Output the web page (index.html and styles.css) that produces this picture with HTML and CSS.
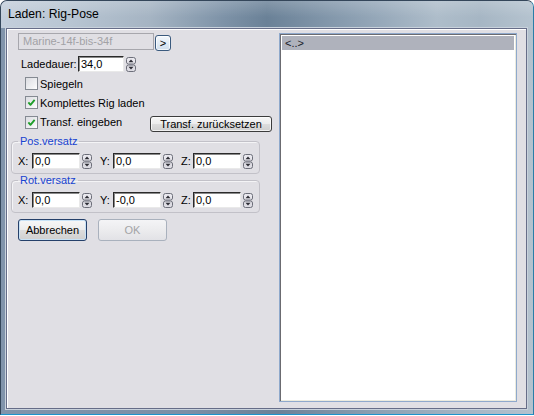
FILE: index.html
```html
<!DOCTYPE html>
<html>
<head>
<meta charset="utf-8">
<link rel="stylesheet" href="styles.css">
</head>
<body>
<svg class="defs" width="0" height="0" aria-hidden="true">
  <symbol id="spin" viewBox="0 0 10 15">
    <rect x="0.5" y="0.5" width="9" height="6.5" rx="2" fill="#e9e8ee" stroke="#6d6f7a"/>
    <rect x="0.5" y="8" width="9" height="6.5" rx="2" fill="#dddce3" stroke="#6d6f7a"/>
    <path d="M2.5 5.2 L5 2.4 L7.5 5.2 Z" fill="#2c2c34"/>
    <path d="M2.5 9.8 L5 12.6 L7.5 9.8 Z" fill="#2c2c34"/>
  </symbol>
  <symbol id="tick" viewBox="0 0 13 13">
    <path d="M2.8 6.4 L5.3 9.2 L10.2 3.4" fill="none" stroke="#1f9e2a" stroke-width="2.2" stroke-linejoin="round"/>
  </symbol>
</svg>
<div class="window">
  <div class="titlebar">Laden: Rig-Pose</div>
  <div class="client">
    <div class="left">
      <div class="row row-file">
        <div class="combo">Marine-14f-bis-34f</div>
        <button class="btn btn-go">&gt;</button>
      </div>
      <div class="row row-dur">
        <span class="lbl">Ladedauer:</span>
        <div class="input w46">34,0</div>
        <svg class="spin"><use href="#spin"/></svg>
      </div>
      <div class="check c1"><span class="box"></span>Spiegeln</div>
      <div class="check c2"><span class="box"><svg class="tick"><use href="#tick"/></svg></span>Komplettes Rig laden</div>
      <div class="check c3">
        <span class="box"><svg class="tick"><use href="#tick"/></svg></span>Transf. eingeben
        <button class="btn btn-reset">Transf. zurücksetzen</button>
      </div>
      <fieldset class="group g1">
        <legend>Pos.versatz</legend>
        <div class="xyz">
          <div class="f fx"><span class="l">X:</span><div class="input">0,0</div><svg class="spin"><use href="#spin"/></svg></div>
          <div class="f fy"><span class="l">Y:</span><div class="input">0,0</div><svg class="spin"><use href="#spin"/></svg></div>
          <div class="f fz"><span class="l">Z:</span><div class="input">0,0</div><svg class="spin"><use href="#spin"/></svg></div>
        </div>
      </fieldset>
      <fieldset class="group g2">
        <legend>Rot.versatz</legend>
        <div class="xyz">
          <div class="f fx"><span class="l">X:</span><div class="input">0,0</div><svg class="spin"><use href="#spin"/></svg></div>
          <div class="f fy"><span class="l">Y:</span><div class="input">-0,0</div><svg class="spin"><use href="#spin"/></svg></div>
          <div class="f fz"><span class="l">Z:</span><div class="input">0,0</div><svg class="spin"><use href="#spin"/></svg></div>
        </div>
      </fieldset>
      <div class="actions">
        <button class="btn btn-main btn-default">Abbrechen</button>
        <button class="btn btn-main btn-disabled">OK</button>
      </div>
    </div>
    <div class="listbox">
      <div class="item sel">&lt;..&gt;</div>
    </div>
  </div>
</div>
</body>
</html>
```

FILE: styles.css
```css
html, body {
  margin: 0;
  padding: 0;
  background: #ffffff;
}
body {
  width: 534px;
  height: 416px;
  overflow: hidden;
  font-family: "Liberation Sans", Arial, sans-serif;
  font-size: 11px;
  color: #000;
}
.defs {
  position: absolute;
  width: 0;
  height: 0;
}
.window {
  width: 534px;
  height: 415px;
  box-sizing: border-box;
  display: flex;
  flex-direction: column;
  border: 1px solid #34465a;
  border-bottom-color: #1d93cc;
  border-right-color: #2a7ea8;
  border-radius: 7px 7px 0 0;
  background: linear-gradient(90deg, #8194ab 0%, #7b8fa6 35%, #6c8197 52%, #8ea2b4 72%, #a9b8c6 90%, #b4c2ce 100%);
}
.titlebar {
  height: 27px;
  box-sizing: border-box;
  padding: 0 0 0 7px;
  line-height: 27px;
  font-size: 12.2px;
  color: #000;
  border-radius: 6px 6px 0 0;
  background:
    linear-gradient(180deg, rgba(255,255,255,0.18) 0%, rgba(255,255,255,0) 60%),
    linear-gradient(90deg, #c3cedb 0%, #b9c6d3 12%, #a5b4c3 28%, #7d92a7 42%, #6a8197 50%, #7f94a8 60%, #98aabb 72%, #aebdca 82%, #a6b6c4 90%, #b5c3cf 100%);
}
.client {
  flex: 1;
  margin: 0 6px 5px 5px;
  border: 1px solid #666d88;
  box-shadow: 0 0 0 1px #c9d2dc, inset 1px 1px 0 #ffffff;
  background: #e0dfe4;
  display: flex;
  padding: 4px 9px 6px 4px;
}
.left {
  width: 268px;
  display: flex;
  flex-direction: column;
  flex: none;
}
.row {
  display: flex;
  align-items: flex-start;
}
.row-file {
  margin-left: 7px;
}
.combo {
  width: 136px;
  height: 17px;
  box-sizing: border-box;
  border: 1px solid #a7a7ad;
  color: #a2a2a6;
  padding-left: 4px;
  line-height: 15px;
  background: #e0dfe4;
}
.btn {
  font-family: "Liberation Sans", Arial, sans-serif;
  font-size: 11px;
  color: #000;
  padding: 0;
  margin: 0;
  box-sizing: border-box;
  border: 1px solid #3c3c3c;
  border-radius: 3px;
  background: linear-gradient(180deg, #f7f7f7 0%, #ededed 48%, #dddddd 52%, #cfcfcf 100%);
  box-shadow: inset 0 0 0 1px rgba(255,255,255,0.7);
}
.btn-go {
  width: 16px;
  height: 16px;
  margin: 2px 0 0 1px;
  line-height: 12px;
  border-color: #3a5a7e;
  background: linear-gradient(180deg, #f4f8fc 0%, #e2ecf6 50%, #cfdeee 100%);
}
.row-dur {
  margin-top: 5px;
  align-items: center;
}
.lbl {
  margin-left: 10px;
  width: 57px;
}
.input {
  width: 48px;
  height: 16px;
  box-sizing: border-box;
  background: #fff;
  border-top: 1px solid #2a2a2a;
  border-left: 1px solid #2a2a2a;
  border-right: 1px solid #e9e9e9;
  border-bottom: 1px solid #e9e9e9;
  box-shadow: inset 1px 1px 0 #8a8a8a;
  padding-left: 2px;
  line-height: 14px;
  color: #000;
}
.w46 {
  width: 46px;
}
.spin {
  width: 10px;
  height: 15px;
  margin-left: 2px;
  flex: none;
}
.check {
  display: flex;
  align-items: center;
  margin-left: 14px;
  height: 13px;
}
.check .box {
  width: 13px;
  height: 13px;
  box-sizing: border-box;
  border: 1px solid #858a92;
  background: linear-gradient(135deg, #dcdde2 0%, #f2f2f4 70%, #ffffff 100%);
  margin-right: 2px;
  flex: none;
  display: flex;
}
.tick {
  width: 11px;
  height: 11px;
}
.c1 {
  margin-top: 5px;
}
.c2 {
  margin-top: 6px;
}
.c3 {
  margin-top: 7px;
  height: 16px;
  align-items: flex-start;
}
.btn-reset {
  margin-left: auto;
  margin-right: 7px;
  width: 122px;
  height: 16px;
  line-height: 13px;
}
.group {
  margin: 0;
  min-width: 0;
  width: 249px;
  box-sizing: border-box;
  border: 1px solid #c2c1c8;
  border-radius: 4px;
  padding: 6px 4px 4px 6px;
  box-shadow: inset 1px 1px 0 #f4f4f6;
}
.group legend {
  padding: 0 2px;
  margin-left: 0;
  color: #1743d0;
  line-height: 12px;
  font-size: 11px;
}
.g1 {
  margin-top: 3px;
}
.g2 {
  margin-top: 0;
}
.xyz {
  display: flex;
  gap: 8px;
}
.f {
  display: flex;
  align-items: center;
}
.fx .l {
  width: 14px;
}
.fy .l {
  width: 13px;
}
.fz .l {
  width: 12px;
}
.actions {
  display: flex;
  gap: 11px;
  margin-top: 6px;
  margin-left: 7px;
}
.btn-main {
  width: 69px;
  height: 22px;
}
.btn-default {
  border-color: #25406a;
  box-shadow: inset 0 0 0 1px #c8e2f6;
}
.btn-disabled {
  color: #a3a3a6;
  border-color: #a9b1bd;
  background: linear-gradient(180deg, #f4f4f6 0%, #ececee 50%, #e2e2e6 100%);
  box-shadow: none;
}
.listbox {
  flex: 1;
  box-sizing: border-box;
  border: 1px solid #8fa9cc;
  background: #fff;
  box-shadow: inset 1px 1px 0 #6b6b70, inset -1px -1px 0 #ebebdf;
  padding: 2px 2px 2px 2px;
}
.item {
  height: 14px;
  line-height: 14px;
  padding-left: 3px;
  color: #1a1a28;
}
.sel {
  background: #afb2bc;
}
```
